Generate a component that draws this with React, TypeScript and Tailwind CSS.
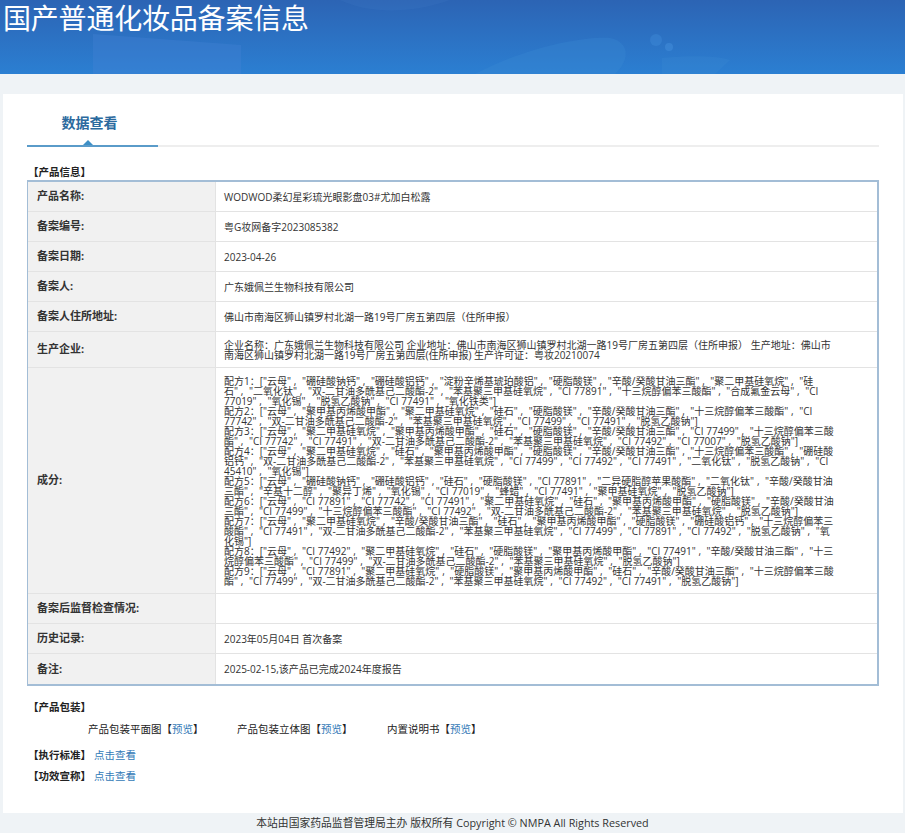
import React from "react";

const font = "[font-family:'Open_Sans','Noto_Sans_CJK_SC',sans-serif]";

const formula = [
  '配方1：["云母", "硼硅酸钠钙", "硼硅酸铝钙", "淀粉辛烯基琥珀酸铝", "硬脂酸镁", "辛酸/癸酸甘油三酯", "聚二甲基硅氧烷", "硅',
  '石", "二氧化钛", "双-二甘油多酰基己二酸酯-2", "苯基聚三甲基硅氧烷", "CI 77891", "十三烷醇偏苯三酸酯", "合成氟金云母", "CI',
  '77019", "氧化锡", "脱氢乙酸钠", "CI 77491", "氧化铁类"]',
  '配方2：["云母", "聚甲基丙烯酸甲酯", "聚二甲基硅氧烷", "硅石", "硬脂酸镁", "辛酸/癸酸甘油三酯", "十三烷醇偏苯三酸酯", "CI',
  '77742", "双-二甘油多酰基己二酸酯-2", "苯基聚三甲基硅氧烷", "CI 77499", "CI 77491", "脱氢乙酸钠"]',
  '配方3：["云母", "聚二甲基硅氧烷", "聚甲基丙烯酸甲酯", "硅石", "硬脂酸镁", "辛酸/癸酸甘油三酯", "CI 77499", "十三烷醇偏苯三酸',
  '酯", "CI 77742", "CI 77491", "双-二甘油多酰基己二酸酯-2", "苯基聚三甲基硅氧烷", "CI 77492", "CI 77007", "脱氢乙酸钠"]',
  '配方4：["云母", "聚二甲基硅氧烷", "硅石", "聚甲基丙烯酸甲酯", "硬脂酸镁", "辛酸/癸酸甘油三酯", "十三烷醇偏苯三酸酯", "硼硅酸',
  '铝钙", "双-二甘油多酰基己二酸酯-2", "苯基聚三甲基硅氧烷", "CI 77499", "CI 77492", "CI 77491", "二氧化钛", "脱氢乙酸钠", "CI',
  '45410", "氧化锡"]',
  '配方5：["云母", "硼硅酸钠钙", "硼硅酸铝钙", "硅石", "硬脂酸镁", "CI 77891", "二异硬脂醇苹果酸酯", "二氧化钛", "辛酸/癸酸甘油',
  '三酯", "辛基十二醇", "聚异丁烯", "氧化锡", "CI 77019", "蜂蜡", "CI 77491", "聚甲基硅氧烷", "脱氢乙酸钠"]',
  '配方6：["云母", "CI 77891", "CI 77742", "CI 77491", "聚二甲基硅氧烷", "硅石", "聚甲基丙烯酸甲酯", "硬脂酸镁", "辛酸/癸酸甘油',
  '三酯", "CI 77499", "十三烷醇偏苯三酸酯", "CI 77492", "双-二甘油多酰基己二酸酯-2", "苯基聚三甲基硅氧烷", "脱氢乙酸钠"]',
  '配方7：["云母", "聚二甲基硅氧烷", "辛酸/癸酸甘油三酯", "硅石", "聚甲基丙烯酸甲酯", "硬脂酸镁", "硼硅酸铝钙", "十三烷醇偏苯三',
  '酸酯", "CI 77491", "双-二甘油多酰基己二酸酯-2", "苯基聚三甲基硅氧烷", "CI 77499", "CI 77891", "CI 77492", "脱氢乙酸钠", "氧',
  '化锡"]',
  '配方8：["云母", "CI 77492", "聚二甲基硅氧烷", "硅石", "硬脂酸镁", "聚甲基丙烯酸甲酯", "CI 77491", "辛酸/癸酸甘油三酯", "十三',
  '烷醇偏苯三酸酯", "CI 77499", "双-二甘油多酰基己二酸酯-2", "苯基聚三甲基硅氧烷", "脱氢乙酸钠"]',
  '配方9：["云母", "CI 77891", "聚二甲基硅氧烷", "硬脂酸镁", "聚甲基丙烯酸甲酯", "硅石", "辛酸/癸酸甘油三酯", "十三烷醇偏苯三酸',
  '酯", "CI 77499", "双-二甘油多酰基己二酸酯-2", "苯基聚三甲基硅氧烷", "CI 77492", "CI 77491", "脱氢乙酸钠"]',
];

function Row({ label, h, children }: { label: string; h: string; children?: React.ReactNode }) {
  return (
    <div className={`flex border-b border-[#e3e3e3] last:border-b-0 ${h}`}>
      <div className="flex w-[188px] shrink-0 items-center border-r border-[#e3e3e3] bg-[#f1f1f1] pl-[9px] text-[11px] font-bold text-[#333]">
        {label}
      </div>
      <div className="flex min-w-0 flex-1 items-center pl-[8px] text-[10px] leading-[10px] text-[#333]">
        {children}
      </div>
    </div>
  );
}

export default function App() {
  return (
    <div className={`flex h-[833px] w-[905px] flex-col overflow-hidden bg-[#eff3f6] ${font}`}>
      <header className="relative h-[74px] shrink-0 overflow-hidden bg-gradient-to-b from-[#2c64b4] to-[#2b7fd2]">
        <svg className="absolute inset-0" width="905" height="74" viewBox="0 0 905 74" fill="none">
          <path d="M93 74V34L241 45V74Z" fill="#4a86d6" fillOpacity="0.3" />
          <path d="M340 0C370 14 410 14 450 0Z" fill="#5a8fd8" fillOpacity="0.1" />
          <path d="M475 74C520 50 580 36 610 38C630 42 630 60 615 74Z" fill="#3a8ad4" fillOpacity="0.3" />
          <path d="M662 74V58C690 55 720 56 730 60L715 74Z" fill="#3a8ad4" fillOpacity="0.25" />
          <circle cx="656" cy="40" r="6" fill="#4a95e2" fillOpacity="0.3" />
          <circle cx="669" cy="47" r="4" fill="#4a95e2" fillOpacity="0.4" />
        </svg>
        <h1 className="relative pl-[3px] text-[28px] leading-[36px] font-normal tracking-[-0.2px] text-white">
          国产普通化妆品备案信息
        </h1>
      </header>

      <main className="ml-[3px] mr-[2px] mt-[20px] h-[719px] shrink-0 bg-white px-[24px]">
        <div className="relative mt-[1px] h-[52px] border-b-2 border-[#eeeeee]">
          <div className="absolute bottom-[-2px] left-0 flex h-[52px] w-[131px] items-center justify-center border-b-2 border-[#5a9bc9] pt-[4px] text-[14px] font-bold text-[#2b6a9e]">
            <span className="pr-[6px]">数据查看</span>
            <span className="absolute bottom-0 left-[56px] h-0 w-0 border-x-[5px] border-b-[5px] border-x-transparent border-b-[#3d8fc6]" />
          </div>
        </div>

        <h2 className="mt-[19px] h-[14px] pl-[1px] text-[10.5px] leading-[13px] font-bold text-[#222]">【产品信息】</h2>

        <div className="w-[852px] border border-t-2 border-[#a3bdd6] border-r-2 border-b-2">
          <Row label="产品名称:" h="h-[30px]">WODWOD柔幻星彩琉光眼影盘03#尤加白松露</Row>
          <Row label="备案编号:" h="h-[30px]">粤G妆网备字2023085382</Row>
          <Row label="备案日期:" h="h-[30px]">2023-04-26</Row>
          <Row label="备案人:" h="h-[30px]">广东娥佩兰生物科技有限公司</Row>
          <Row label="备案人住所地址:" h="h-[30px]">佛山市南海区狮山镇罗村北湖一路19号厂房五第四层（住所申报）</Row>
          <Row label="生产企业:" h="h-[36px]">
            <div className="whitespace-nowrap">
              <div>企业名称：广东娥佩兰生物科技有限公司 企业地址：佛山市南海区狮山镇罗村北湖一路19号厂房五第四层（住所申报） 生产地址：佛山市</div>
              <div>南海区狮山镇罗村北湖一路19号厂房五第四层(住所申报) 生产许可证：粤妆20210074</div>
            </div>
          </Row>
          <Row label="成分:" h="h-[226px]">
            <div className="whitespace-pre [word-spacing:0.2px]">
              {formula.map((line, i) => (
                <div key={i}>{line.replace(/", "/g, '" ,  "')}</div>
              ))}
            </div>
          </Row>
          <Row label="备案后监督检查情况:" h="h-[30px]" />
          <Row label="历史记录:" h="h-[30px]">2023年05月04日 首次备案</Row>
          <Row label="备注:" h="h-[30px]">2025-02-15,该产品已完成2024年度报告</Row>
        </div>

        <section className="pl-[1px] text-[10.5px] text-[#222]">
          <div className="mt-[14px] leading-[14px] font-bold">【产品包装】</div>
          <div className="mt-[8px] flex pl-[60px] leading-[14px]">
            <span className="w-[149px]">产品包装平面图【<a className="text-[#337ab7]">预览</a>】</span>
            <span className="w-[150px]">产品包装立体图【<a className="text-[#337ab7]">预览</a>】</span>
            <span>内置说明书【<a className="text-[#337ab7]">预览</a>】</span>
          </div>
          <div className="mt-[12px] flex leading-[14px]">
            <span className="w-[66px] font-bold">【执行标准】</span>
            <a className="text-[#337ab7]">点击查看</a>
          </div>
          <div className="mt-[7px] flex leading-[14px]">
            <span className="w-[66px] font-bold">【功效宣称】</span>
            <a className="text-[#337ab7]">点击查看</a>
          </div>
        </section>
      </main>

      <footer className="flex h-[20px] items-center justify-center text-[10.8px] text-[#333]">
        本站由国家药品监督管理局主办 版权所有 Copyright © NMPA All Rights Reserved
      </footer>
    </div>
  );
}
